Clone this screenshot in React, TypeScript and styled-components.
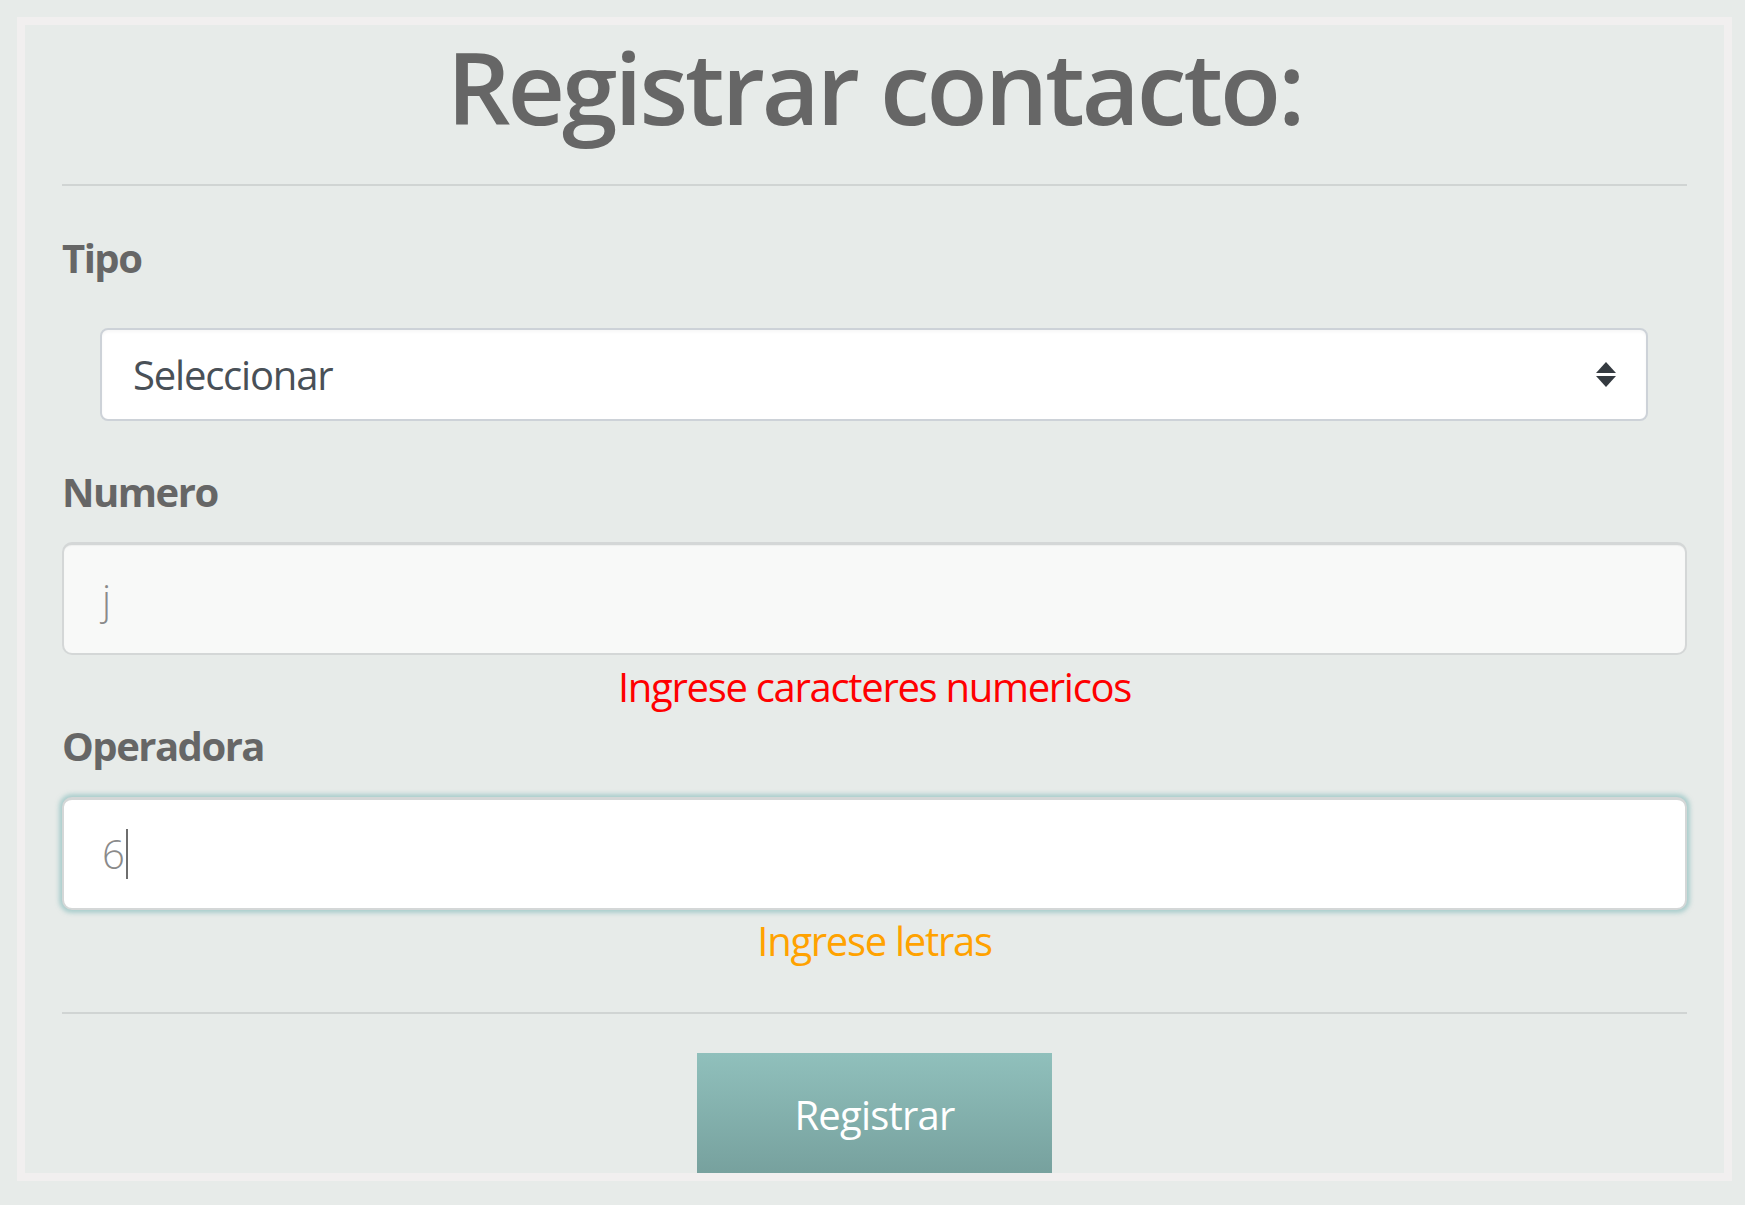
import React from "react";
import styled, { createGlobalStyle } from "styled-components";

const Global = createGlobalStyle`
  html, body {
    margin: 0;
    padding: 0;
    background: #e7ebe9;
  }
  body {
    font-family: "Open Sans", "Noto Sans", sans-serif;
  }
  * { box-sizing: border-box; }
`;

const Frame = styled.div`
  margin: 17px 13px 17px 17px;
  height: 1164px;
  border: 8px solid #f1efef;
  background: #e7ebe9;
  overflow: hidden;
  padding: 1px 37px 0;
  display: flex;
  flex-direction: column;
`;

const Title = styled.h1`
  margin: 0;
  font-size: 100px;
  line-height: 120px;
  font-weight: 600;
  color: #666666;
  text-align: center;
  letter-spacing: -3px;
`;

const Divider = styled.hr<{ $top: number }>`
  margin: ${(p) => p.$top}px 0 0;
  border: 0;
  height: 2px;
  flex-shrink: 0;
  background: #d0d4d3;
`;

const Label = styled.label<{ $top: number }>`
  display: block;
  margin-top: ${(p) => p.$top}px;
  font-size: 40px;
  line-height: 48px;
  font-weight: 700;
  color: #666666;
  letter-spacing: -1.5px;
`;

const SelectBox = styled.div`
  margin: 46px 39px 0 38px;
  height: 93px;
  flex-shrink: 0;
  background: #ffffff;
  border: 2px solid #cdd2d8;
  border-radius: 8px;
  box-shadow: inset 0 2px 3px rgba(0, 0, 0, 0.035);
  display: flex;
  align-items: center;
  justify-content: space-between;
  padding: 0 30px 0 31px;
`;

const SelectText = styled.span`
  font-size: 40px;
  line-height: 48px;
  color: #495057;
  letter-spacing: -1.2px;
`;

const Field = styled.div<{ $focused?: boolean; $top: number }>`
  margin-top: ${(p) => p.$top}px;
  height: 113px;
  flex-shrink: 0;
  border: 2px solid #d4d7d7;
  border-top-width: 3px;
  border-radius: 10px;
  background: ${(p) => (p.$focused ? "#ffffff" : "#f8f9f8")};
  box-shadow: ${(p) =>
    p.$focused
      ? "0 0 4px 3px rgba(122, 182, 182, 0.55)"
      : "inset 0 1px 1px rgba(0,0,0,0.04)"};
  display: flex;
  align-items: center;
  padding-left: 38px;
`;

const FieldText = styled.span`
  font-size: 40px;
  line-height: 48px;
  font-weight: 300;
  color: #8a8a8a;
`;

const Caret = styled.span`
  display: inline-block;
  width: 2px;
  height: 50px;
  background: #6e6e6e;
  margin-left: 1px;
`;

const FieldRow = styled.div`
  display: flex;
  align-items: center;
`;

const Message = styled.p<{ $color: string; $top: number }>`
  margin: ${(p) => p.$top}px 0 0;
  font-size: 40px;
  line-height: 48px;
  color: ${(p) => p.$color};
  text-align: center;
  letter-spacing: -1.3px;
`;

const ButtonRow = styled.div`
  display: flex;
  justify-content: center;
  margin-top: 39px;
`;

const Button = styled.button`
  width: 355px;
  height: 124px;
  border: 0;
  border-radius: 0;
  background: linear-gradient(to bottom, #90c0bc, #76a09d);
  color: #ffffff;
  font-family: "Open Sans", "Noto Sans", sans-serif;
  font-size: 40px;
  line-height: 48px;
  letter-spacing: -0.8px;
  padding: 0;
  flex-shrink: 0;
`;

const SortIcon = () => (
  <svg width="20" height="26" viewBox="0 0 20 26" aria-hidden="true">
    <path d="M10 0 L20 11 H0 Z" fill="#343a40" />
    <path d="M0 14 H20 L10 25 Z" fill="#343a40" />
  </svg>
);

export default function App() {
  return (
    <>
      <Global />
      <Frame>
        <Title>Registrar contacto:</Title>
        <Divider $top={38} />
        <Label $top={48}>Tipo</Label>
        <SelectBox>
          <SelectText>Seleccionar</SelectText>
          <SortIcon />
        </SelectBox>
        <Label $top={47}>Numero</Label>
        <Field $top={26}>
          <FieldText>j</FieldText>
        </Field>
        <Message $color="#ff0000" $top={8}>
          Ingrese caracteres numericos
        </Message>
        <Label $top={11}>Operadora</Label>
        <Field $focused $top={27}>
          <FieldRow>
            <FieldText>6</FieldText>
            <Caret />
          </FieldRow>
        </Field>
        <Message $color="#ffa200" $top={7}>
          Ingrese letras
        </Message>
        <Divider $top={47} />
        <ButtonRow>
          <Button>Registrar</Button>
        </ButtonRow>
      </Frame>
    </>
  );
}
